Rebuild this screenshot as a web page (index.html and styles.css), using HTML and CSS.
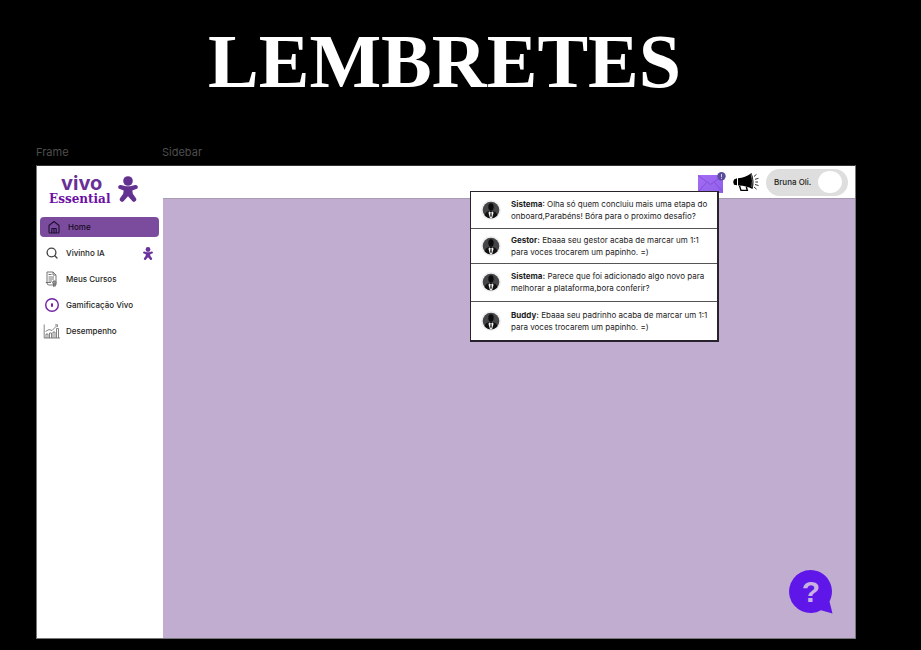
FILE: index.html
```
<!DOCTYPE html>
<html lang="pt-BR">
<head>
<meta charset="utf-8">
<meta name="viewport" content="width=device-width, initial-scale=1">
<title>Lembretes</title>
<link rel="stylesheet" href="styles.css">
</head>
<body>
<svg class="defs" aria-hidden="true">
  <symbol id="mascot" viewBox="0 0 20 26">
    <circle cx="10" cy="5" r="4.800"/>
    <path d="M2.800 9 8 10.300h4L17.200 9a2.100 2.100 0 0 1 1 4.100L14.300 14.500l.5 3.300 3 4.300a2.300 2.300 0 0 1-3.800 2.700L10 20.300l-4 4.500a2.300 2.300 0 0 1-3.800-2.700l3-4.300.5-3.300-3.900-1.400A2.100 2.100 0 0 1 2.800 9Z"/>
  </symbol>
  <symbol id="avatar" viewBox="0 0 20 20">
    <circle cx="10" cy="10" r="10" fill="#efefef"/>
    <circle cx="10" cy="10" r="8.300" fill="#454547"/>
    <path d="M3.500 15.200c.6-2.700 2.800-3.600 4.600-4.200h3.800c1.800.6 4 1.500 4.600 4.200A8.300 8.300 0 0 1 10 18.300a8.300 8.300 0 0 1-6.500-3.100Z" fill="#111"/>
    <ellipse cx="10" cy="7" rx="2.700" ry="3.700" fill="#0b0b0b"/>
    <path d="m8 11.500 2 .8 2-.8.500 1.500-1.500 5.200H9L7.500 13Z" fill="#f4f4f4"/>
    <path d="m9.500 12.500.5-.3.500.3.300 3.500-.8 1.600-.8-1.600Z" fill="#222"/>
  </symbol>
</svg>

<h1 class="title">LEMBRETES</h1>

<div class="labels"><span class="label-frame">Frame</span><span>Sidebar</span></div>

<div class="app">
  <aside class="sidebar">
    <div class="brand">
      <div class="brand-text"><span class="brand-name">vivo</span><span class="brand-sub">Essential</span></div>
      <svg class="brand-mascot" aria-hidden="true"><use href="#mascot"/></svg>
    </div>
    <nav class="nav">
      <a class="nav-link active" href="#">
        <svg class="icon" viewBox="0 0 18 18" fill="none" stroke="#1d1030" stroke-width="1.100" stroke-linejoin="round"><path d="M4 7.500 9 3.500l5 4V14a1 1 0 0 1-1 1H5a1 1 0 0 1-1-1ZM6.800 15v-4.500h4.400V15M9 10.500V15"/></svg>
        <span>Home</span>
      </a>
      <a class="nav-link" href="#">
        <svg class="icon" viewBox="0 0 18 18" fill="none" stroke="#444" stroke-width="1.300" stroke-linecap="round"><circle cx="8.500" cy="8.500" r="4.400"/><path d="m11.800 11.800 2.200 2.200"/></svg>
        <span>Vivinho IA</span>
        <svg class="nav-mascot" aria-hidden="true"><use href="#mascot"/></svg>
      </a>
      <a class="nav-link" href="#">
        <svg class="icon" viewBox="0 0 18 18" fill="none" stroke="#666" stroke-width=".9"><path d="M4 2h6l3 3v10H6a2 2 0 0 1-2-2ZM10 2v3h3M5.500 4.500h3M5.500 7H11M5.500 9H11M5.500 11H9M2.800 12.500H8"/><circle cx="11.300" cy="12.500" r="1.700" fill="#999"/><path d="M10.500 14v2.500l.8-.6.8.6V14"/></svg>
        <span>Meus Cursos</span>
      </a>
      <a class="nav-link" href="#">
        <svg class="icon" viewBox="0 0 18 18" fill="none" stroke="#7220a8"><circle cx="9" cy="9" r="6.300" stroke-width="1.400"/><path d="M8.500 8h1v2.500h-1ZM9 7V8" stroke-width="1"/></svg>
        <span>Gamificação Vivo</span>
      </a>
      <a class="nav-link" href="#">
        <svg class="icon" viewBox="0 0 18 18" fill="none" stroke="#666" stroke-width=".8"><path d="M1.200 2.500V16H17M3 16v-4h2v4M6.500 16v-5h2v5M10 16v-6h2v6M13.500 16V6.500h2V16M2.500 9.500l3.500-2 3 1 5-5M12 3l2.500-.3-.3 2.500"/></svg>
        <span>Desempenho</span>
      </a>
    </nav>
  </aside>

  <div class="main">
    <header class="topbar">
      <button class="icon-button" type="button" aria-label="Mensagens">
        <svg class="mail" viewBox="0 0 28 22"><defs><linearGradient id="mailfill" x2="1" y2="1"><stop stop-color="#a56cf5"/><stop offset="1" stop-color="#8f60ea"/></linearGradient></defs><path d="M0 4h25v18H0Z" fill="url(#mailfill)"/><path d="m0 4.500 12.500 9L25 4.500M0 21l8.500-9.500M25 21l-8.500-9.500" fill="none" stroke="#7a45cc" stroke-width=".7"/><circle cx="23.500" cy="5.300" r="4.200" fill="#5b4b9c"/><path d="M23.500 3v3M23.500 6.800v1" stroke="#d8d0ee"/></svg>
      </button>
      <button class="icon-button" type="button" aria-label="Avisos">
        <svg class="horn" viewBox="0 0 28 22"><path d="M2 8.500 5 7.300v7L2 13.800Q.3 11 2 8.500ZM6 7.200c5 0 9-1.800 13.500-5.200q3.500 8.500 1 16C16 15.500 11 14.300 6 14.500Z"/><path d="m7.500 14.800 1.500 4.600h6.300l-1-3.600" fill="none" stroke="#000" stroke-width="1.400"/><path d="M19 3q2.500 7 .8 13" fill="none" stroke="#aaa" stroke-width=".7"/><path d="m22 5.500 2.500-2.200M23 8.300l3.500-1M23.300 11H26M23 13.500l3.500 1M22 16l2.500 2.200" fill="none" stroke="#333" stroke-width="1"/></svg>
      </button>
      <button class="profile" type="button"><span>Bruna Oli.</span><span class="profile-photo"></span></button>

      <ul class="reminders">
        <li><svg class="avatar" aria-hidden="true"><use href="#avatar"/></svg><p><b>Sistema</b>: Olha só quem concluiu mais uma etapa do<br>onboard,Parabéns! Bóra para o proximo desafio?</p></li>
        <li><svg class="avatar" aria-hidden="true"><use href="#avatar"/></svg><p><b>Gestor:</b> Ebaaa seu gestor acaba de marcar um 1:1<br>para voces trocarem um papinho. =)</p></li>
        <li><svg class="avatar" aria-hidden="true"><use href="#avatar"/></svg><p><b>Sistema:</b> Parece que foi adicionado algo novo para<br>melhorar a plataforma,bora conferir?</p></li>
        <li><svg class="avatar" aria-hidden="true"><use href="#avatar"/></svg><p><b>Buddy:</b> Ebaaa seu padrinho acaba de marcar um 1:1<br>para voces trocarem um papinho. =)</p></li>
      </ul>
    </header>
    <main class="content">
      <button class="help" type="button" aria-label="Ajuda">
        <svg class="help-bubble" viewBox="0 0 44 44" aria-hidden="true"><path d="M21.500 0a21.500 21.500 0 0 1 19 31.500L43.500 43.500 32 40.300A21.500 21.500 0 1 1 21.500 0Z"/></svg>
        <span class="help-mark">?</span>
      </button>
    </main>
  </div>
</div>
</body>
</html>
```
FILE: styles.css
```
* { box-sizing: border-box; }

body {
  margin: 0;
  min-height: 100vh;
  padding: 0 65px 11px 36px;
  display: flex;
  flex-direction: column;
  background: #000;
  color: #1c1c1c;
  font-family: Inter, "Liberation Sans", sans-serif;
}

button {
  border: 0;
  padding: 0;
  background: none;
  color: inherit;
  font: inherit;
}

.defs { position: absolute; width: 0; height: 0; }

.title {
  margin: 0;
  padding: 19px 0 0 172px;
  color: #fff;
  font: bold 76px/84px "Liberation Serif", serif;
}

.labels {
  display: flex;
  margin-top: 41px;
  padding-bottom: 5px;
  color: #4e4e4e;
  font-size: 11px;
  line-height: 16px;
}

.label-frame { width: 126px; }

.app {
  flex: 1;
  display: flex;
  border: 1px solid #777;
  border-top-color: #333;
}

.sidebar {
  width: 126px;
  flex: none;
  background: #fff;
}

.brand {
  display: flex;
  align-items: center;
  gap: 8px;
  height: 51px;
  padding: 0 0 6px 12px;
}

.brand-text {
  display: flex;
  flex-direction: column;
  align-items: center;
}

.brand-name {
  padding-left: 4px;
  color: #693096;
  font-size: 20px;
  font-weight: 700;
  line-height: 20px;
}

.brand-sub {
  color: #6c0fa6;
  font: bold 12px/12px "DejaVu Serif", serif;
}

.brand-mascot { width: 20px; height: 26px; fill: #63318f; }

.nav {
  display: flex;
  flex-direction: column;
  padding: 0 4px 0 3px;
}

.nav-link {
  display: flex;
  align-items: center;
  gap: 5px;
  height: 26px;
  padding: 0 6px 0 3px;
  color: #1c1c1c;
  font-size: 8px;
  font-weight: 500;
  text-decoration: none;
}

.nav-link.active {
  height: 20px;
  margin-bottom: 3px;
  padding-left: 5px;
  border-radius: 4px;
  background: #7b4c9e;
  color: #160b20;
}

.icon { width: 18px; height: 18px; flex: none; }

.nav-mascot { width: 10px; height: 13px; margin-left: auto; fill: #6a329c; }

.main {
  flex: 1;
  min-width: 0;
  display: flex;
  flex-direction: column;
}

.topbar {
  position: relative;
  display: flex;
  align-items: center;
  justify-content: flex-end;
  gap: 6px;
  height: 33px;
  padding-right: 7px;
  border-bottom: 1px solid #a69bb0;
  background: #fff;
}

.icon-button { display: flex; }

.mail, .horn { width: 28px; height: 22px; }

.profile {
  display: flex;
  align-items: center;
  justify-content: space-between;
  width: 82px;
  height: 27px;
  padding: 0 6px 0 8px;
  border-radius: 14px;
  background: #dedede;
  font-size: 8px;
  font-weight: 500;
}

.profile-photo {
  width: 24px;
  height: 22px;
  border-radius: 50%;
  background: #fff;
}

.reminders {
  position: absolute;
  top: 25px;
  right: 136px;
  z-index: 1;
  display: grid;
  grid-template-rows: 37px 35px 38px 38px;
  width: 249px;
  margin: 0;
  padding: 0;
  border: 1px solid #28222c;
  border-width: 1px 2px 2px 1px;
  background: #fff;
  list-style: none;
}

.reminders li {
  display: flex;
  align-items: center;
  gap: 10px;
  padding: 0 0 1px 10px;
  border-bottom: 1px solid #555;
}

.reminders li:last-child { border-bottom: 0; }

.reminders p {
  margin: 0;
  font-size: 8px;
  line-height: 12px;
  white-space: nowrap;
}

.reminders b { font-weight: 700; }

.avatar { width: 20px; height: 20px; flex: none; }

.content {
  flex: 1;
  display: flex;
  align-items: flex-end;
  justify-content: flex-end;
  padding: 24px 22px;
  background: #c1add0;
}

.help {
  display: grid;
  place-items: center;
  width: 44px;
  height: 44px;
}

.help > * { grid-area: 1 / 1; }

.help-bubble { width: 44px; height: 44px; fill: #5f16e8; }

.help-mark {
  color: #c9b2e2;
  font: bold 30px/44px "Liberation Sans", sans-serif;
}
```
